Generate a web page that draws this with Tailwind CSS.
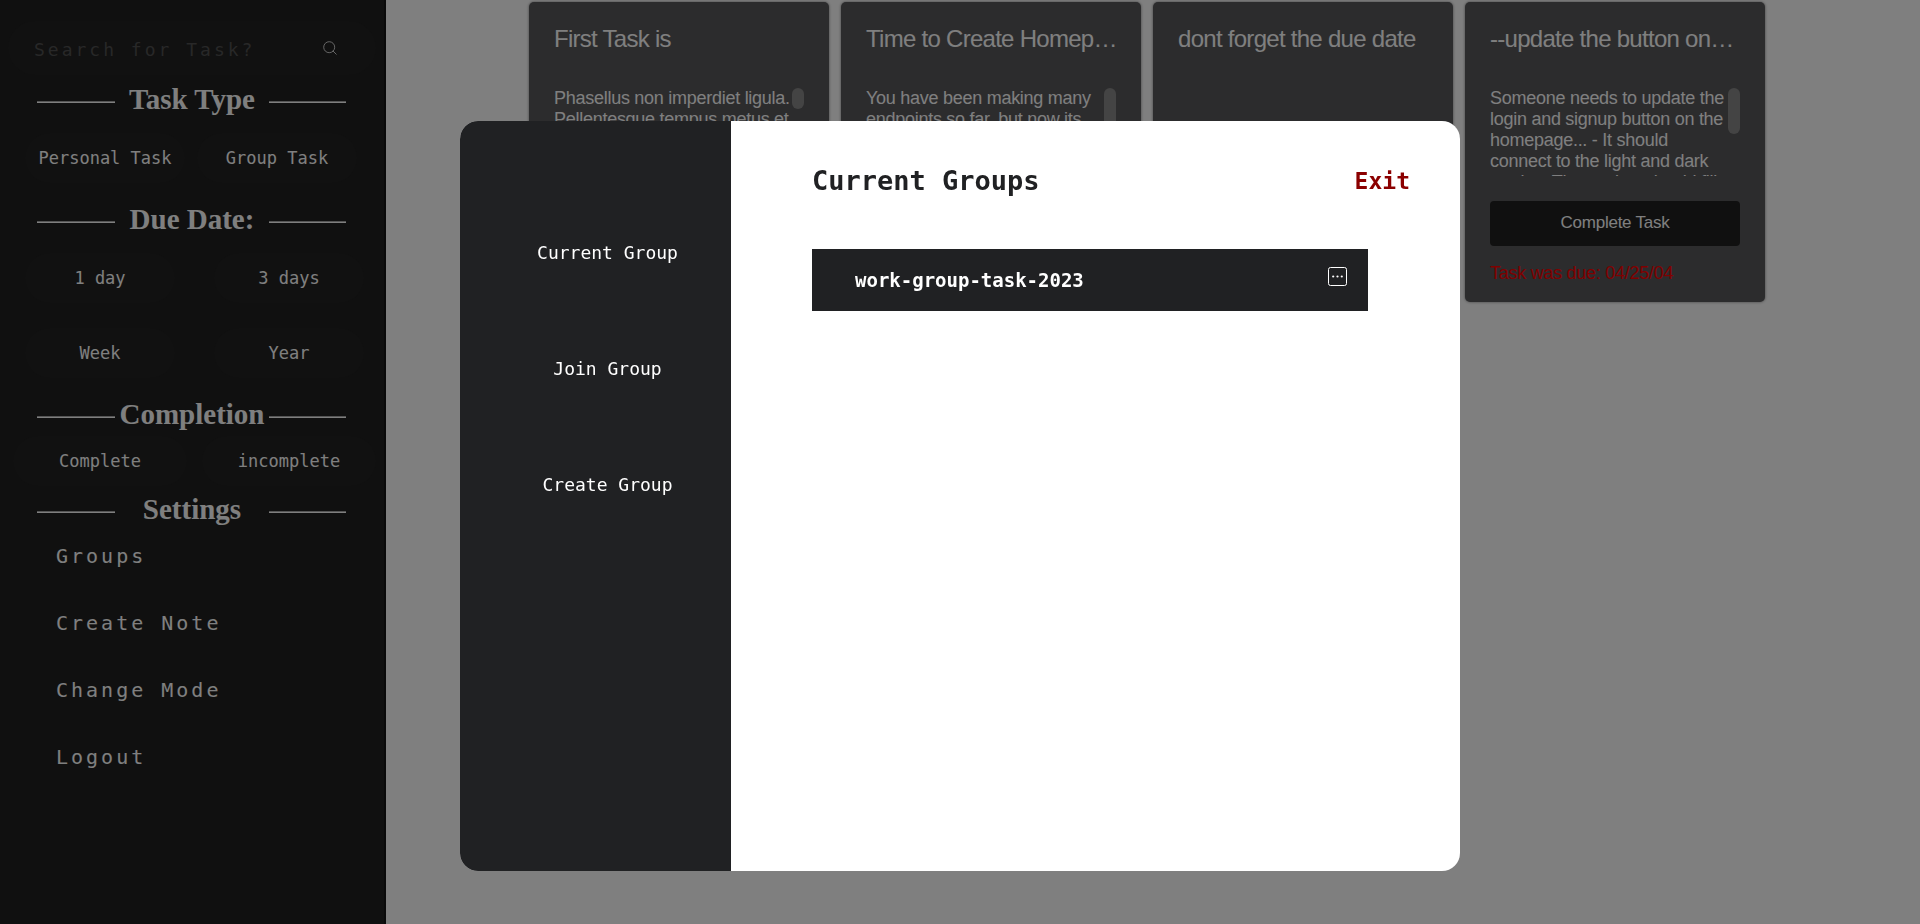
<!DOCTYPE html>
<html lang="en">
<head>
<meta charset="utf-8">
<meta name="viewport" content="width=device-width, initial-scale=1">
<title>Tasks</title>
<script src="https://cdn.jsdelivr.net/npm/@tailwindcss/browser@4"></script>
</head>
<body class="min-h-screen bg-white font-['DejaVu_Sans_Mono',monospace]">
<div class="flex min-h-screen">
  <aside class="w-[386px] shrink-0 border-r-2 border-[#141414] bg-[#202020] pt-[21px] text-[17px] text-white">
    <form class="mx-2 flex h-[54px] items-center rounded-full bg-[#222222] pr-[39px] pl-[26px]">
      <input type="search" aria-label="Search for Task" placeholder="Search for Task?" class="min-w-0 flex-1 bg-transparent pt-[2px] text-[18px] tracking-[3px] outline-none placeholder:text-[#505050]">
      <button type="submit" aria-label="Search">
        <svg class="size-[14px]" viewBox="0 0 14 14" fill="none" stroke="#cccccc"><circle cx="6.2" cy="6.2" r="5.5"/><path d="M9.8 9.8 13.5 13.5"/></svg>
      </button>
    </form>

    <h2 class="mr-[38px] ml-[37px] mt-[9px] flex h-9 items-center font-['Liberation_Serif',serif] text-[29px] font-bold before:h-[2px] before:w-[78px] before:border-t before:border-b before:border-t-[#aaaaaa] before:border-b-white after:h-[2px] after:w-[77px] after:border-t after:border-b after:border-t-[#aaaaaa] after:border-b-white"><span class="flex-1 pb-1 text-center whitespace-nowrap">Task Type</span></h2>
    <div class="mt-[13px] flex gap-3 pl-[25px]">
      <button class="h-[50px] w-[160px] rounded-full bg-[#222222] pt-[2px]">Personal Task</button>
      <button class="h-[50px] w-[160px] rounded-full bg-[#222222] pt-[2px]">Group Task</button>
    </div>

    <h2 class="mr-[38px] ml-[37px] mt-[21px] flex h-9 items-center font-['Liberation_Serif',serif] text-[29px] font-bold before:h-[2px] before:w-[78px] before:border-t before:border-b before:border-t-[#aaaaaa] before:border-b-white after:h-[2px] after:w-[77px] after:border-t after:border-b after:border-t-[#aaaaaa] after:border-b-white"><span class="flex-1 pb-1 text-center whitespace-nowrap">Due Date:</span></h2>
    <div class="mt-[13px] grid grid-cols-[150px_150px] gap-x-[39px] gap-y-[25px] pl-[25px]">
      <button class="h-[50px] rounded-full bg-[#222222] pt-[2px]">1 day</button>
      <button class="h-[50px] rounded-full bg-[#222222] pt-[2px]">3 days</button>
      <button class="h-[50px] rounded-full bg-[#222222] pt-[2px]">Week</button>
      <button class="h-[50px] rounded-full bg-[#222222] pt-[2px]">Year</button>
    </div>

    <h2 class="mr-[38px] ml-[37px] mt-[21px] flex h-9 items-center font-['Liberation_Serif',serif] text-[29px] font-bold before:h-[2px] before:w-[78px] before:border-t before:border-b before:border-t-[#aaaaaa] before:border-b-white after:h-[2px] after:w-[77px] after:border-t after:border-b after:border-t-[#aaaaaa] after:border-b-white"><span class="flex-1 pb-1 text-center whitespace-nowrap">Completion</span></h2>
    <div class="mt-px grid grid-cols-[174px_174px] gap-x-[15px] pl-[13px]">
      <button class="h-[50px] rounded-full bg-[#222222] pt-[2px]">Complete</button>
      <button class="h-[50px] rounded-full bg-[#222222] pt-[2px]">incomplete</button>
    </div>

    <h2 class="mr-[38px] ml-[37px] mt-2 flex h-9 items-center font-['Liberation_Serif',serif] text-[29px] font-bold before:h-[2px] before:w-[78px] before:border-t before:border-b before:border-t-[#aaaaaa] before:border-b-white after:h-[2px] after:w-[77px] after:border-t after:border-b after:border-t-[#aaaaaa] after:border-b-white"><span class="flex-1 pb-1 text-center whitespace-nowrap">Settings</span></h2>
    <nav class="mt-[6px] flex flex-col items-start gap-[27px] pl-14 text-[20px] tracking-[3px]">
      <a href="#" class="flex h-10 items-center">Groups</a>
      <a href="#" class="flex h-10 items-center">Create Note</a>
      <a href="#" class="flex h-10 items-center">Change Mode</a>
      <a href="#" class="flex h-10 items-center">Logout</a>
    </nav>
  </aside>

  <main class="flex flex-1 flex-wrap content-start justify-center gap-3 pt-[2px] pr-[12px] font-['Liberation_Sans',sans-serif] text-[18px] leading-[21px] tracking-[-0.015em] text-white">
    <article class="flex h-[300px] w-[300px] flex-col rounded-[5px] bg-[#58585b] px-[25px] pt-[23px] shadow-[0_0_3px_#00000080]">
      <h3 class="shrink-0 text-[24px] leading-7 tracking-[-0.03em] whitespace-nowrap">First Task is</h3>
      <div class="relative mt-[35px] h-[88px] shrink-0 overflow-hidden pr-3"><p>Phasellus non imperdiet ligula. Pellentesque tempus metus et</p><span class="absolute top-0 right-0 h-[21px] w-3 rounded-full bg-[#888888]"></span></div>
    </article>
    <article class="flex h-[300px] w-[300px] flex-col rounded-[5px] bg-[#58585b] px-[25px] pt-[23px] shadow-[0_0_3px_#00000080]">
      <h3 class="shrink-0 text-[24px] leading-7 tracking-[-0.03em] whitespace-nowrap">Time to Create Homep…</h3>
      <div class="relative mt-[35px] h-[88px] shrink-0 overflow-hidden pr-3"><p>You have been making many endpoints so far, but now its</p><span class="absolute top-0 right-0 h-[46px] w-3 rounded-full bg-[#888888]"></span></div>
    </article>
    <article class="flex h-[300px] w-[300px] flex-col rounded-[5px] bg-[#58585b] px-[25px] pt-[23px] shadow-[0_0_3px_#00000080]">
      <h3 class="shrink-0 text-[24px] leading-7 tracking-[-0.03em] whitespace-nowrap">dont forget the due date</h3>
    </article>
    <article class="flex h-[300px] w-[300px] flex-col rounded-[5px] bg-[#58585b] px-[25px] pt-[23px] shadow-[0_0_3px_#00000080]">
      <h3 class="shrink-0 text-[24px] leading-7 tracking-[-0.03em] whitespace-nowrap">--update the button on…</h3>
      <div class="relative mt-[35px] h-[88px] shrink-0 overflow-hidden pr-3"><p>Someone needs to update the login and signup button on the homepage... - It should connect to the light and dark modes. The navbar should fill</p><span class="absolute top-0 right-0 h-[46px] w-3 rounded-full bg-[#888888]"></span></div>
      <button class="mt-[25px] h-[45px] shrink-0 rounded-[4px] bg-[#202020] pb-[2px] text-[17px] tracking-[-0.015em]">Complete Task</button>
      <p class="mt-[17px] text-[#ff0000]">Task was due: 04/25/04</p>
    </article>
  </main>
</div>

<div class="fixed inset-0 flex items-start justify-center bg-black/50 pt-[121px]">
  <section role="dialog" aria-modal="true" aria-labelledby="groups-title" class="flex h-[750px] w-[1000px] overflow-hidden rounded-[18px] bg-white">
    <nav class="flex w-[271px] shrink-0 flex-col items-center gap-[92px] bg-[#202123] pt-[120px] pl-6 text-[18px] leading-6 text-white">
      <a href="#">Current Group</a>
      <a href="#">Join Group</a>
      <a href="#">Create Group</a>
    </nav>
    <div class="flex-1 pt-10 pr-[50px] pl-[81px]">
      <header class="flex h-10 items-center justify-between">
        <h1 id="groups-title" class="text-[27px] font-bold text-[#202123]">Current Groups</h1>
        <button class="text-[23px] font-bold text-[#8b0000]">Exit</button>
      </header>
      <div class="mt-12 mr-[42px] flex h-[62px] items-center justify-between bg-[#202123] pr-[21px] pl-[43px] text-white">
        <span class="text-[19px] font-bold">work-group-task-2023</span>
        <button aria-label="Group options" class="mb-[7px]">
          <svg class="size-[19px]" viewBox="0 0 19 19"><rect x=".5" y=".5" width="18" height="18" rx="2" fill="none" stroke="currentColor"/><g fill="currentColor"><circle cx="5.2" cy="9.5" r="1.1"/><circle cx="9.5" cy="9.5" r="1.1"/><circle cx="13.8" cy="9.5" r="1.1"/></g></svg>
        </button>
      </div>
    </div>
  </section>
</div>
</body>
</html>
